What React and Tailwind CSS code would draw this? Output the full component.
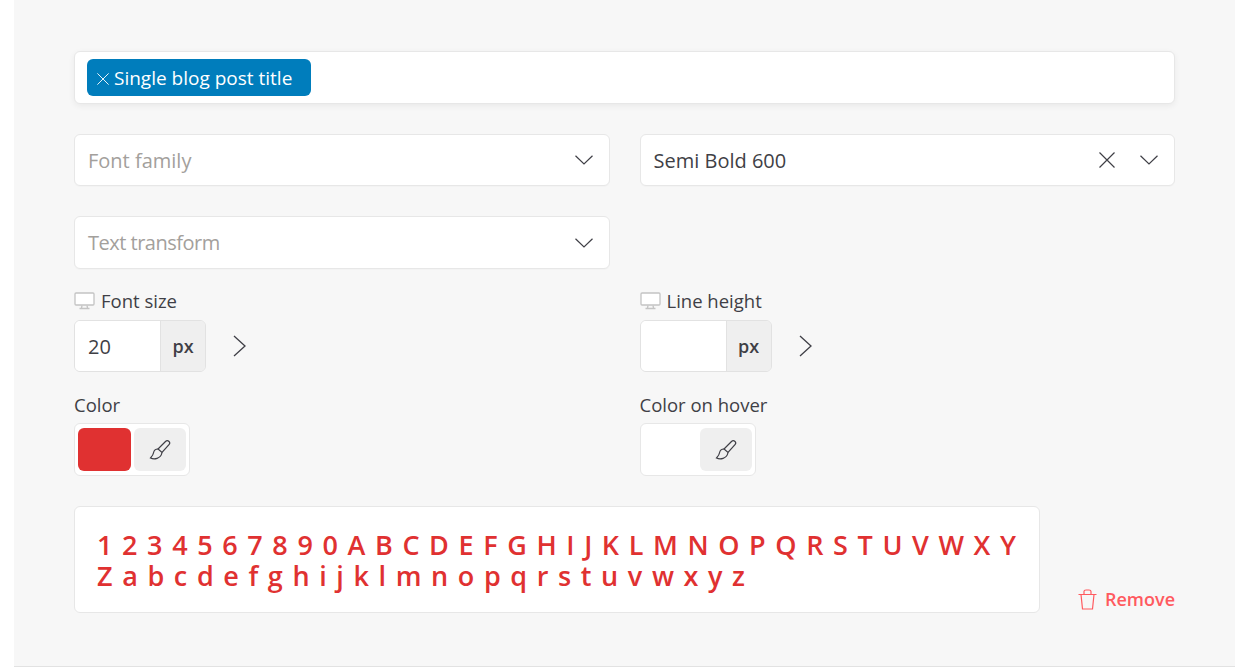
const Chevron = () => (
  <svg width="18" height="10" viewBox="0 0 18 10" fill="none" stroke="#3f3f46" strokeWidth="1.2"><path d="M0.5 0.8 L9 9 L17.5 0.8" /></svg>
);
const Cross = ({ size = 16, color = "#3f3f46" }) => (
  <svg width={size} height={size} viewBox="0 0 16 16" fill="none" stroke={color} strokeWidth="1.2"><path d="M0.5 0.5 L15.5 15.5 M15.5 0.5 L0.5 15.5" /></svg>
);
const Monitor = () => (
  <svg width="21" height="18" viewBox="0 0 21 18" fill="none" stroke="#c4c4c4" strokeWidth="1.3"><rect x="1" y="1" width="19" height="12" rx="1" fill="#fff" /><path d="M8 13.5 L7.5 16 M13 13.5 L13.5 16 M5.5 16.5 H15.5" /></svg>
);
const Caret = () => (
  <svg width="13" height="22" viewBox="0 0 13 22" fill="none" stroke="#3f3f46" strokeWidth="1.3"><path d="M1 1 L12 11 L1 21" /></svg>
);
const Brush = () => (
  <svg width="22" height="22" viewBox="0 0 22 22" fill="none" stroke="#3f3f46" strokeWidth="1.2"><path d="M9 10 L16.5 2.5 C17.5 1.5 19 1.5 20 2.5 C21 3.5 20.8 4.8 20 5.7 L13 13.5 Z" /><path d="M9 10 C6.5 10 5 11.5 4.6 13.5 C4.3 15.5 3.5 17 1.5 19 C5 20.8 11.8 20 13 13.5" /></svg>
);
const Trash = () => (
  <svg width="19" height="21" viewBox="0 0 19 21" fill="none" stroke="#ff5a5f" strokeWidth="1.2"><path d="M0.5 5.5 H18.5 M3 5.5 L4.5 20 H14.5 L16 5.5 M6 5 V2.5 C6 1.5 7 1 8 1 H11 C12 1 13 1.5 13 2.5 V5" /></svg>
);

function Select({ text, placeholder, clear, tight }) {
  return (
    <div className={`${tight ? "h-[53px]" : "h-[52px]"} bg-white border border-[#e7e7e7] rounded-md flex items-center pl-[13px] pr-4 shadow-[0_1px_1px_rgba(0,0,0,0.02)]`}>
      <span className={`flex-1 text-[20px] ${placeholder ? "text-[#a3a09c]" : "text-[#3f3f46]"} ${tight ? "tracking-[-0.5px]" : "pt-[2px]"}`}>{text}</span>
      {clear && <span className="mr-[25px] flex"><Cross /></span>}
      <Chevron />
    </div>
  );
}

function NumberField({ label, value }) {
  return (
    <div>
      <div className="flex items-center gap-[6px] h-[22px] text-[18.5px] text-[#3f3f46]"><Monitor />{label}</div>
      <div className="mt-[8px] flex items-center">
        <div className="w-[132px] h-[52px] flex border border-[#e2e2e2] rounded-md overflow-hidden">
          <div className="flex-1 bg-white pl-[13px] pt-[2px] flex items-center text-[20px] text-[#3f3f46]">{value}</div>
          <div className="w-[45px] bg-[#efefef] border-l border-[#e2e2e2] flex items-center justify-center text-[18px] font-semibold text-[#3f3f46]">px</div>
        </div>
        <span className="ml-[27px] flex"><Caret /></span>
      </div>
    </div>
  );
}

function ColorField({ label, color }) {
  return (
    <div>
      <div className="h-[22px] flex items-center text-[18.5px] text-[#3f3f46]">{label}</div>
      <div className="mt-[7px] w-[116px] h-[53px] bg-white border border-[#e7e7e7] rounded-md flex items-center gap-[3px] pl-[3px]">
        <div className={`w-[53px] h-[43px] rounded-md ${color ? "bg-[#e03131]" : "bg-white"}`} />
        <div className="w-[52px] h-[43px] rounded-md bg-[#efefef] flex items-center justify-center"><Brush /></div>
      </div>
    </div>
  );
}

export default function App() {
  return (
    <div className="bg-white w-[1240px] h-[669px] overflow-hidden" style={{ fontFamily: '"Open Sans", "Noto Sans", sans-serif' }}>
      <div className="ml-[14px] w-[1221px] h-[667px] bg-[#f7f7f7] border-b border-[#e2e2e2] px-[60px] pt-[51px]">
        <div className="h-[53px] bg-white border border-[#e7e7e7] rounded-md shadow-[0_2px_6px_rgba(0,0,0,0.06)] flex items-center pl-3">
          <div className="w-[224px] h-[37px] rounded-md bg-[#007dbc] flex items-center pl-[10px] pt-[2px] gap-[5px] text-[19px] text-white">
            <Cross size={12} color="#fff" />
            Single blog post title
          </div>
        </div>

        <div className="mt-[30px] grid grid-cols-2 gap-x-[30px] gap-y-[30px]">
          <Select text="Font family" placeholder />
          <Select text="Semi Bold 600" clear />
          <Select text="Text transform" placeholder tight />
        </div>

        <div className="mt-[21px] grid grid-cols-2 gap-x-[30px]">
          <NumberField label="Font size" value="20" />
          <NumberField label="Line height" value="" />
        </div>

        <div className="mt-[22px] grid grid-cols-2 gap-x-[30px]">
          <ColorField label="Color" color />
          <ColorField label="Color on hover" />
        </div>

        <div className="mt-[30px] flex items-end">
          <div className="w-[966px] h-[107px] bg-white border border-[#e7e7e7] rounded-md pl-[22px] pr-3 pt-[22px] text-[27px] leading-[31px] font-semibold tracking-[1.3px] text-[#e03131]">
            1 2 3 4 5 6 7 8 9 0 A B C D E F G H I J K L M N O P Q R S T U V W X Y Z a b c d e f g h i j k l m n o p q r s t u v w x y z
          </div>
          <div className="ml-auto flex items-center gap-[8px] text-[18px] font-semibold text-[#ff5a5f]">
            <Trash />
            Remove
          </div>
        </div>
      </div>
    </div>
  );
}
